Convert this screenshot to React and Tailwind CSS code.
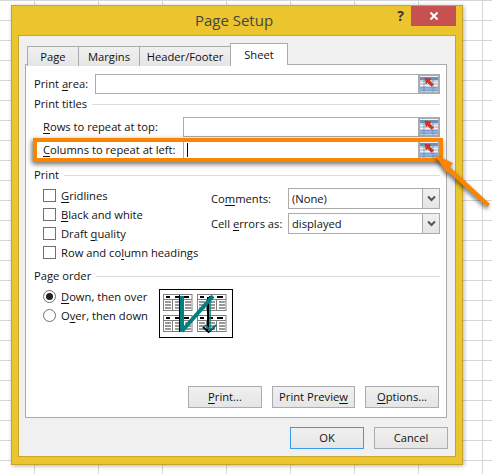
import React from "react";

const FONT = "font-['Open_Sans','Noto_Sans',sans-serif]";

function U({ children }) {
  return <span className="underline underline-offset-2 decoration-1">{children}</span>;
}

function RefIcon() {
  return (
    <div className="w-[22px] h-[20px] bg-[#c8c8c8] border-2 border-[#ababab] shrink-0 flex items-center justify-center">
      <svg width="18" height="16" viewBox="0 0 18 16">
        <rect width="18" height="16" fill="#eef3f9" />
        <rect x="0" y="1" width="18" height="3" fill="#6d8fb8" />
        <rect x="0" y="11" width="18" height="4" fill="#8fb0e4" />
        <path d="M0 5h18M0 8h18M0 11h18M0 15h18M4 4v12M13 4v12" stroke="#5f7f9f" strokeWidth="0.6" fill="none" />
        <path d="M5 2l6 1-1.400 1.400L13.500 8.500l-2 2-4-4L6 8z" fill="#d9301e" stroke="#a02010" strokeWidth="0.4" />
      </svg>
    </div>
  );
}

function RefInput({ cursor }) {
  return (
    <div className="flex-1 flex h-[20px]">
      <div className="flex-1 h-full bg-white border border-[#ababab] border-r-0 flex items-center pl-[3px]">
        {cursor && <div className="w-px h-[14px] bg-black" />}
      </div>
      <RefIcon />
    </div>
  );
}

function GroupHead({ children, className = "" }) {
  return (
    <div className={`flex items-center h-[16px] gap-[5px] ${className}`}>
      <span>{children}</span>
      <div className="flex-1 h-px bg-[#dcdcdc]" />
    </div>
  );
}

function Check({ children }) {
  return (
    <div className="flex items-center h-[19px] gap-[5px]">
      <div className="w-[13px] h-[13px] bg-white border border-[#707070] shrink-0" />
      <span className="whitespace-nowrap">{children}</span>
    </div>
  );
}

function Radio({ on, children }) {
  return (
    <div className="flex items-center h-[19px] gap-[5px]">
      <div className="w-[13px] h-[13px] rounded-full bg-white border border-[#707070] shrink-0 flex items-center justify-center">
        {on && <div className="w-[7px] h-[7px] rounded-full bg-[#222]" />}
      </div>
      <span className="whitespace-nowrap">{children}</span>
    </div>
  );
}

function Select({ value }) {
  return (
    <div className="w-[152px] h-[21px] bg-white border border-[#ababab] flex items-stretch">
      <div className="flex-1 pl-[3px] flex items-center">{value}</div>
      <div className="w-[17px] border-l border-[#ababab] bg-gradient-to-b from-[#f0f0f0] to-[#e5e5e5] flex items-center justify-center">
        <svg width="9" height="7" viewBox="0 0 9 7">
          <path d="M1 1.500l3.500 3.500L8 1.500" stroke="#555" strokeWidth="2" fill="none" />
        </svg>
      </div>
    </div>
  );
}

function Btn({ children, blue }) {
  return (
    <div
      className={`w-[74px] h-[22px] border ${blue ? "border-[#3a99ee]" : "border-[#acacac]"} bg-gradient-to-b from-[#f0f0f0] to-[#e5e5e5] flex items-center justify-center`}
    >
      {children}
    </div>
  );
}

function Tab({ children, w }) {
  return (
    <div className={`${w} h-[20px] mt-[2px] border border-b-0 border-[#ababab] -ml-px first:ml-0 bg-gradient-to-b from-[#f0f0f0] to-[#e5e5e5] flex items-center justify-center`}>
      {children}
    </div>
  );
}

function MiniTable({ x, y }) {
  const cols = [0, 10, 20];
  return (
    <g transform={`translate(${x} ${y})`}>
      <rect x="0.5" y="0.5" width="28.5" height="16" fill="#fff" stroke="#808080" />
      <path d="M3 3h4M12 3h4M20 3h6" stroke="#000" strokeWidth="2" />
      <path d="M1 5.500h28" stroke="#808080" />
      {cols.map((c) => (
        <path key={c} d={`M${c + 2} 8h6M${c + 2} 11h6M${c + 2} 14h6`} stroke="#333" strokeWidth="1" />
      ))}
      <path d="M9.500 5v11M19.500 5v11" stroke="#808080" />
    </g>
  );
}

function OrderPicture() {
  return (
    <svg width="74" height="49" viewBox="0 0 74 49" className="shrink-0">
      <rect x="0.5" y="0.5" width="73" height="48" fill="#fff" stroke="#000" />
      <MiniTable x={4} y={5} />
      <MiniTable x={38} y={5} />
      <MiniTable x={4} y={26} />
      <MiniTable x={38} y={26} />
      <path d="M49 8v33" stroke="#000" strokeWidth="2" />
      <path d="M44 38l5.500 5 6-5" stroke="#000" strokeWidth="2" fill="none" />
      <path d="M51 8v32" stroke="#008080" strokeWidth="1.500" />
      <path d="M46 36l5 5 6.500-5" stroke="#008080" strokeWidth="2" fill="none" />
      <path d="M23 7v35L54 7" stroke="#008080" strokeWidth="4" fill="none" strokeLinejoin="bevel" />
      <path d="M20.500 6v37" stroke="#000" strokeWidth="1" />
    </svg>
  );
}

export default function App() {
  return (
    <div
      className={`${FONT} relative w-[492px] h-[474px] overflow-hidden bg-white pt-[5px] pl-[11px] text-[11.2px] leading-none text-[#111] bg-[linear-gradient(to_right,#d6d6d6_1px,transparent_1px),linear-gradient(to_bottom,#d6d6d6_1px,transparent_1px)] bg-[length:64px_20px] bg-[position:34px_0px]`}
    >
      <div className="w-[452px] h-[460px] bg-[#ebc42e] border border-[#c6a62c] shadow-[1px_1px_4px_rgba(0,0,0,0.3)] flex flex-col">
        <div className="h-[29px] grid grid-cols-[1fr_auto_1fr] shrink-0 pr-[6px]">
          <div />
          <div className="text-[15px] text-[#444] pt-[4px] leading-[20px]">Page Setup</div>
          <div className="flex justify-end items-start">
            <span className="text-[14px] font-bold text-[#333] mt-[1px] mr-[7px] leading-[18px]">?</span>
            <div className="w-[45px] h-[20px] bg-[#c75050] flex items-center justify-center">
              <svg width="10" height="10" viewBox="0 0 10 10">
                <path d="M1.500 1.500l7 7M8.500 1.500l-7 7" stroke="#fff" strokeWidth="2" />
              </svg>
            </div>
          </div>
        </div>

        <div className="mx-[6px] h-[422px] bg-[#f0f0f0] border border-[#c6a62c] pt-[8px] px-[6px] flex flex-col">
          <div className="flex pl-[2px] h-[21px] relative z-10 shrink-0">
            <Tab w="w-[52px]">Page</Tab>
            <Tab w="w-[62px]">Margins</Tab>
            <Tab w="w-[92px]">Header/Footer</Tab>
            <div className="w-[58px] h-[22px] -ml-px -mt-px bg-white border border-b-0 border-[#ababab] flex items-center justify-center">
              Sheet
            </div>
          </div>

          <div className="h-[354px] w-[422px] -mt-px bg-white border border-[#ababab] pl-[8px] pr-[6px] pt-[9px] pb-[9px] flex flex-col">
            <div className="flex items-center">
              <span className="w-[61px] whitespace-nowrap">Print <U>a</U>rea:</span>
              <RefInput />
            </div>
            <GroupHead className="mt-[2px]">Print titles</GroupHead>
            <div className="flex items-center mt-[5px] pl-[9px]">
              <span className="w-[140px] whitespace-nowrap"><U>R</U>ows to repeat at top:</span>
              <RefInput />
            </div>
            <div className="relative flex items-center mt-[3px] pl-[9px]">
              <span className="w-[140px] whitespace-nowrap"><U>C</U>olumns to repeat at left:</span>
              <RefInput cursor />
              <div className="absolute -left-[1px] -right-[3px] -top-[2px] -bottom-[2px] border-[4px] border-[#fb8500] shadow-[-1px_2px_5px_rgba(0,0,0,0.6)] pointer-events-none" />
            </div>
            <GroupHead className="mt-[7px]">Print</GroupHead>
            <div className="flex mt-[3px]">
              <div className="w-[177px] pl-[9px]">
                <Check><U>G</U>ridlines</Check>
                <Check><U>B</U>lack and white</Check>
                <Check>Draft <U>q</U>uality</Check>
                <Check>Row and co<U>l</U>umn headings</Check>
              </div>
              <div className="flex-1 pt-[2px] flex flex-col gap-[4px]">
                <div className="flex items-center">
                  <span className="w-[77px] whitespace-nowrap">Co<U>m</U>ments:</span>
                  <Select value="(None)" />
                </div>
                <div className="flex items-center">
                  <span className="w-[77px] whitespace-nowrap">Cell <U>e</U>rrors as:</span>
                  <Select value="displayed" />
                </div>
              </div>
            </div>
            <GroupHead className="mt-[6px]">Page order</GroupHead>
            <div className="flex pl-[9px] mt-[3px]">
              <div className="w-[116px]">
                <Radio on><U>D</U>own, then over</Radio>
                <Radio>O<U>v</U>er, then down</Radio>
              </div>
              <div className="mt-[2px]"><OrderPicture /></div>
            </div>
            <div className="mt-auto mr-[1px] flex justify-end gap-[10px]">
              <Btn><span><U>P</U>rint...</span></Btn>
              <div className="w-[83px] h-[22px] border border-[#acacac] bg-gradient-to-b from-[#f0f0f0] to-[#e5e5e5] flex items-center justify-center">
                <span>Print Previe<U>w</U></span>
              </div>
              <Btn><span><U>O</U>ptions...</span></Btn>
            </div>
          </div>

          <div className="flex justify-end gap-[10px] mt-[9px] mr-[1px]">
            <Btn blue>OK</Btn>
            <Btn>Cancel</Btn>
          </div>
        </div>
      </div>

      <svg
        width="70"
        height="70"
        viewBox="0 0 70 70"
        className="absolute left-[425px] top-[145px] drop-shadow-[-1px_2px_2px_rgba(0,0,0,0.6)]"
      >
        <path d="M10 10L28 18 25 22 65 59 62.500 62 22 26 23 30z" fill="#fb8500" />
      </svg>
    </div>
  );
}
